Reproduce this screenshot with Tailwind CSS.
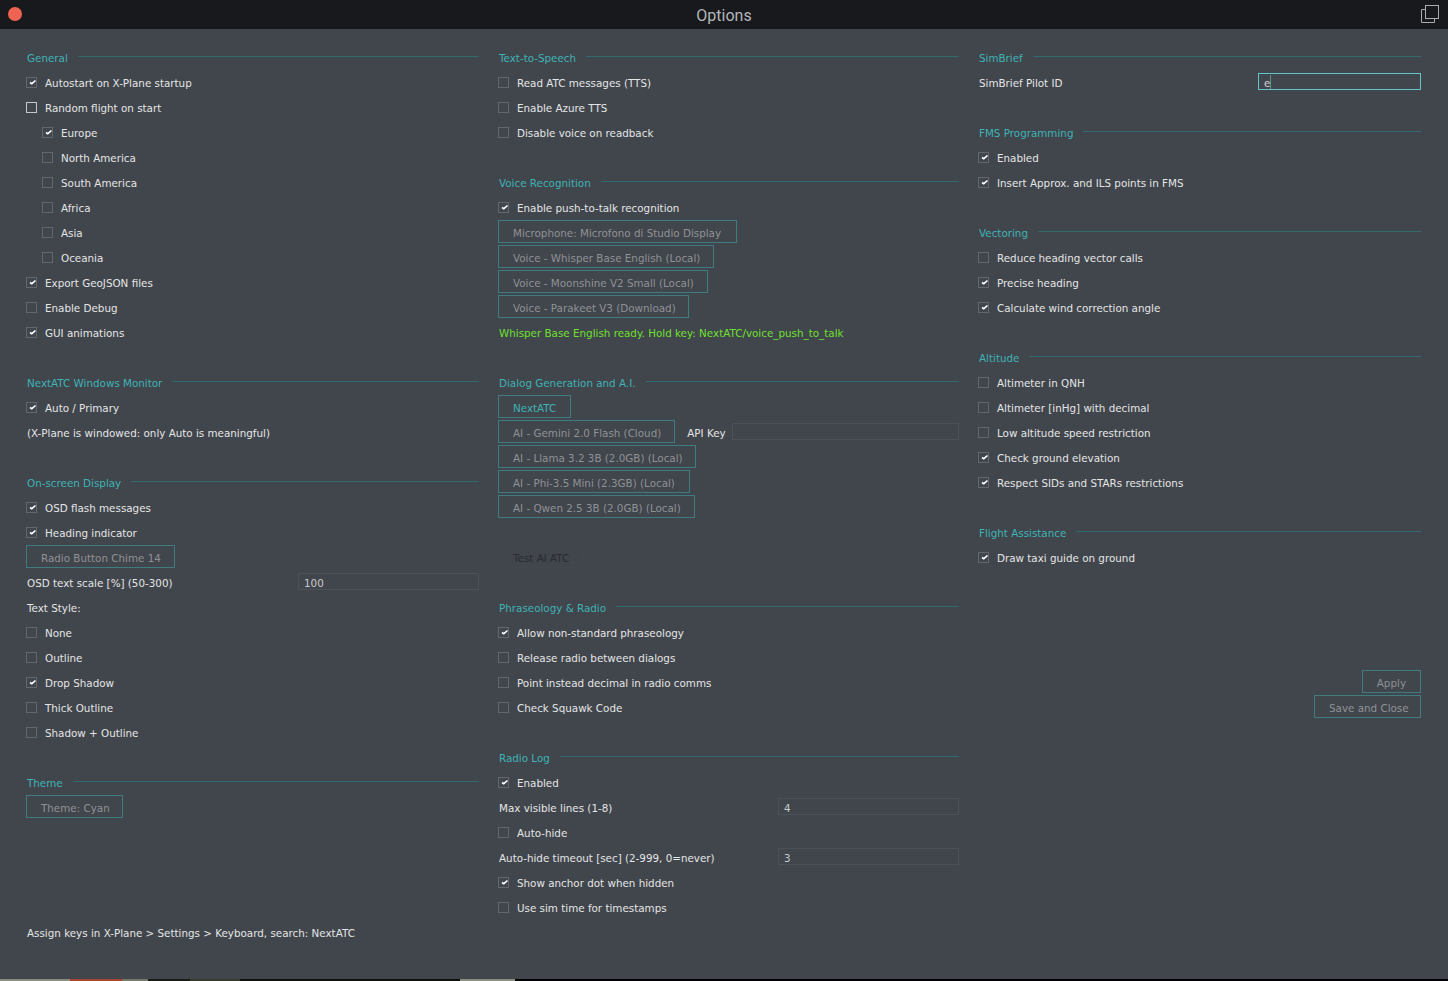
<!DOCTYPE html>
<html lang="en">
<head>
  <meta charset="UTF-8">
  <title>Options</title>
  <script src="https://cdn.jsdelivr.net/npm/@tailwindcss/browser@4"></script>
</head>
<body class="relative bg-[#41454c] font-['DejaVu_Sans',sans-serif] text-[10.35px] text-[#e4e5e6] w-[1448px] h-[981px] overflow-hidden">
  <!-- Title bar -->
  <header class="relative h-[29px] bg-[#17191c] flex items-center justify-center">
    <span class="absolute left-[8px] top-[7px] w-[14px] h-[14px] rounded-full bg-[#ee6352]"></span>
    <span class="font-['Roboto',sans-serif] text-[16px] text-[#b4b6b9] translate-y-[1px]">Options</span>
    <svg class="absolute left-[1420px] top-[4px]" width="20" height="20" viewBox="0 0 20 20" fill="none" stroke="#a9acae" stroke-width="1">
      <path d="M5 5.500h-3.500v13h13v-3.500"/>
      <rect x="5.500" y="1.500" width="13" height="13"/>
    </svg>
  </header>

  <main class="grid grid-cols-[452px_460px_442px] gap-x-[20px] pl-[27px] pt-[17px]">
    <div id="col1"></div>
    <div id="col2"></div>
    <div id="col3"></div>
  </main>

  <!-- sliver of the sim scenery under the window -->
  <div class="absolute left-0 top-[979px] w-full h-[2px] bg-black flex">
    <span class="w-[70px] bg-[#8a8a80]"></span>
    <span class="w-[52px] bg-[#a8452f]"></span>
    <span class="w-[26px] bg-[#77776c]"></span>
    <span class="w-[42px] bg-[#1c1a14]"></span>
    <span class="w-[50px] bg-[#3a3a2e]"></span>
    <span class="w-[220px] bg-[#12110c]"></span>
    <span class="w-[55px] bg-[#8d8d84]"></span>
  </div>

  <script>
    const head = t => `<div class="h-[25px] flex items-center gap-[10px] text-[#3fb3b6]"><span>${t}</span><span class="flex-1 h-px bg-[#2f6b6e] -translate-y-[2px]"></span></div>`;
    const tick = `<svg class="absolute left-[1px] top-[1px]" width="9" height="7" viewBox="0 0 9 7" fill="none" stroke="#fff" stroke-width="1.600"><path d="M2 3.500l1.800 1.200L7.500 1.500"/></svg>`;
    const check = (t, on, opts = {}) => `<div class="h-[25px] flex items-center gap-[8px] ${opts.sub ? 'pl-[16px]' : ''}">
      <span class="relative w-[11px] h-[11px] border -ml-px -translate-y-[1px] ${opts.hot ? 'border-[#c4c6c9]' : 'border-[#63676d]'}">${on ? tick : ''}</span><span>${t}</span></div>`;
    const btn = (t, color = 'text-[#8f9295]', pr = 'pr-[14px]') => `<div class="h-[25px] flex items-start"><button class="h-[23px] pl-[14px] ${pr} pt-[4px] -ml-px -mt-px border border-[#3f7c80] ${color}">${t}</button></div>`;
    const text = t => `<div class="h-[25px] flex items-center">${t}</div>`;
    const gap = n => `<div style="height:${n * 25}px"></div>`;
    const field = (t, v, x) => `<div class="h-[25px] flex items-center justify-between"><span>${t}</span><span class="${x} h-[17px] -translate-y-[2px] border border-[#4c5057] pl-[5px] pt-[4px] flex items-center text-[#c8cacc]">${v}</span></div>`;

    col1.innerHTML = [
      head('General'),
      check('Autostart on X-Plane startup', 1),
      check('Random flight on start', 0, { hot: 1 }),
      check('Europe', 1, { sub: 1 }),
      check('North America', 0, { sub: 1 }),
      check('South America', 0, { sub: 1 }),
      check('Africa', 0, { sub: 1 }),
      check('Asia', 0, { sub: 1 }),
      check('Oceania', 0, { sub: 1 }),
      check('Export GeoJSON files', 1),
      check('Enable Debug', 0),
      check('GUI animations', 1),
      gap(1),
      head('NextATC Windows Monitor'),
      check('Auto / Primary', 1),
      text('(X-Plane is windowed: only Auto is meaningful)'),
      gap(1),
      head('On-screen Display'),
      check('OSD flash messages', 1),
      check('Heading indicator', 1),
      btn('Radio Button Chime 14', 'text-[#8f9295]', 'pr-[13px]'),
      field('OSD text scale [%] (50-300)', '100', 'w-[181px]'),
      text('Text Style:'),
      check('None', 0),
      check('Outline', 0),
      check('Drop Shadow', 1),
      check('Thick Outline', 0),
      check('Shadow + Outline', 0),
      gap(1),
      head('Theme'),
      btn('Theme: Cyan', 'text-[#8f9295]', 'pr-[12px]'),
      gap(4),
      text('Assign keys in X-Plane &gt; Settings &gt; Keyboard, search: NextATC'),
    ].join('');

    col2.innerHTML = [
      head('Text-to-Speech'),
      check('Read ATC messages (TTS)', 0),
      check('Enable Azure TTS', 0),
      check('Disable voice on readback', 0),
      gap(1),
      head('Voice Recognition'),
      check('Enable push-to-talk recognition', 1),
      btn('Microphone: Microfono di Studio Display', 'text-[#8f9295]', 'pr-[15px]'),
      btn('Voice - Whisper Base English (Local)', 'text-[#8f9295]', 'pr-[13px]'),
      btn('Voice - Moonshine V2 Small (Local)', 'text-[#8f9295]', 'pr-[13px]'),
      btn('Voice - Parakeet V3 (Download)', 'text-[#8f9295]', 'pr-[12px]'),
      `<div class="h-[25px] flex items-center text-[#6fe02f]">Whisper Base English ready. Hold key: NextATC/voice_push_to_talk</div>`,
      gap(1),
      head('Dialog Generation and A.I.'),
      btn('NextATC', 'text-[#3fb3b6]'),
      `<div class="h-[25px] flex items-start"><button class="h-[23px] pl-[14px] pr-[13px] pt-[4px] -ml-px -mt-px border border-[#3f7c80] text-[#8f9295]">AI - Gemini 2.0 Flash (Cloud)</button><span class="ml-[12px] mt-[5px]">API Key</span><span class="ml-[6px] mt-[2px] flex-1 h-[17px] border border-[#4c5057]"></span></div>`,
      btn('AI - Llama 3.2 3B (2.0GB) (Local)', 'text-[#8f9295]', 'pr-[12px]'),
      btn('AI - Phi-3.5 Mini (2.3GB) (Local)'),
      btn('AI - Qwen 2.5 3B (2.0GB) (Local)', 'text-[#8f9295]', 'pr-[13px]'),
      gap(1),
      `<div class="h-[25px] flex items-start"><button class="h-[23px] px-[14px] pt-[4px] -ml-px -mt-px border border-[#43474e] text-[#2a2c30]">Test AI ATC</button></div>`,
      gap(1),
      head('Phraseology &amp; Radio'),
      check('Allow non-standard phraseology', 1),
      check('Release radio between dialogs', 0),
      check('Point instead decimal in radio comms', 0),
      check('Check Squawk Code', 0),
      gap(1),
      head('Radio Log'),
      check('Enabled', 1),
      field('Max visible lines (1-8)', '4', 'w-[181px]'),
      check('Auto-hide', 0),
      field('Auto-hide timeout [sec] (2-999, 0=never)', '3', 'w-[181px]'),
      check('Show anchor dot when hidden', 1),
      check('Use sim time for timestamps', 0),
    ].join('');

    col3.innerHTML = [
      head('SimBrief'),
      `<div class="h-[25px] flex items-center justify-between"><span>SimBrief Pilot ID</span><span class="w-[163px] h-[17px] -translate-y-[2px] border border-[#62c5c8] pl-[5px] flex items-center text-[#d0d2d4]"><span class="pt-[4px]">e</span><span class="w-px h-[14px] bg-[#5a8f93]"></span></span></div>`,
      gap(1),
      head('FMS Programming'),
      check('Enabled', 1),
      check('Insert Approx. and ILS points in FMS', 1),
      gap(1),
      head('Vectoring'),
      check('Reduce heading vector calls', 0),
      check('Precise heading', 1),
      check('Calculate wind correction angle', 1),
      gap(1),
      head('Altitude'),
      check('Altimeter in QNH', 0),
      check('Altimeter [inHg] with decimal', 0),
      check('Low altitude speed restriction', 0),
      check('Check ground elevation', 1),
      check('Respect SIDs and STARs restrictions', 1),
      gap(1),
      head('Flight Assistance'),
      check('Draw taxi guide on ground', 1),
      gap(4),
      `<div class="flex flex-col items-end">
        <div class="h-[25px] flex items-start"><button class="h-[23px] px-[14px] pt-[4px] -mt-px border border-[#3f7c80] text-[#8f9295]">Apply</button></div>
        <div class="h-[25px] flex items-start"><button class="h-[23px] pl-[14px] pr-[12px] pt-[4px] -mt-px border border-[#3f7c80] text-[#8f9295] w-[107px] whitespace-nowrap">Save and Close</button></div>
      </div>`,
    ].join('');
  </script>
</body>
</html>
